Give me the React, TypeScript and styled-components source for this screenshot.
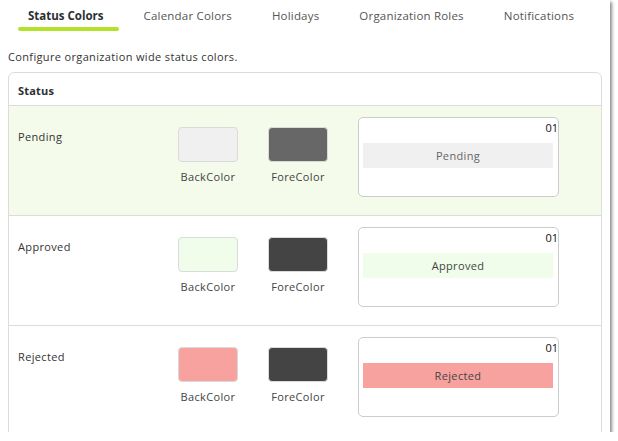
import React from "react";
import styled, { createGlobalStyle } from "styled-components";

const GlobalStyle = createGlobalStyle`
  html, body {
    margin: 0;
    padding: 0;
    background: #ffffff;
  }
  body {
    font-family: "Open Sans", "Liberation Sans", sans-serif;
    color: #333;
    letter-spacing: 0.35px;
  }
`;

const Window = styled.div`
  width: 610px;
  height: 432px;
  overflow: hidden;
  background: #ffffff;
  box-shadow: 2px 2px 3px rgba(0, 0, 0, 0.45);
`;

const TabBar = styled.div`
  display: flex;
  padding-left: 8px;
`;

const Tab = styled.div<{ $active?: boolean }>`
  position: relative;
  padding: 9px 20px 9px;
  font-size: 11.5px;
  line-height: 14px;
  font-weight: ${(p) => (p.$active ? 700 : 400)};
  letter-spacing: ${(p) => (p.$active ? "0" : "0.2px")};
  color: ${(p) => (p.$active ? "#2b2f33" : "#555")};
  white-space: nowrap;

  &::after {
    content: "";
    display: ${(p) => (p.$active ? "block" : "none")};
    position: absolute;
    left: 10px;
    right: 5px;
    bottom: 1px;
    height: 4px;
    border-radius: 2px;
    background: #b3e22b;
  }
`;

const Intro = styled.p`
  margin: 18px 0 8px 8px;
  font-size: 11px;
  line-height: 14px;
  color: #333;
`;

const Card = styled.div`
  margin: 0 8px;
  border: 1px solid #dcdcdc;
  border-radius: 6px 6px 0 0;
`;

const CardHeader = styled.div`
  padding: 11px 9px 7px;
  font-size: 11px;
  line-height: 14px;
  font-weight: 700;
  letter-spacing: 0.2px;
  color: #2b2f33;
  border-bottom: 1px solid #dcdcdc;
`;

const Row = styled.div<{ $highlight?: boolean }>`
  display: flex;
  align-items: flex-start;
  height: 87px;
  padding: 11px 9px;
  background: ${(p) => (p.$highlight ? "#f4fbea" : "#ffffff")};
  border-bottom: 1px solid #dcdcdc;
`;

const StatusName = styled.div`
  width: 160px;
  margin-top: 13px;
  font-size: 11px;
  line-height: 14px;
  color: #333;
`;

const SwatchGroup = styled.div`
  display: flex;
  flex-direction: column;
  align-items: center;
  width: 60px;
  margin-top: 10px;
  margin-right: 30px;
`;

const Swatch = styled.div<{ $color: string }>`
  width: 58px;
  height: 33px;
  border: 1px solid #dadada;
  border-radius: 4px;
  background: ${(p) => p.$color};
`;

const SwatchLabel = styled.div`
  margin-top: 8px;
  font-size: 11px;
  line-height: 14px;
  color: #444;
  white-space: nowrap;
`;

const Preview = styled.div`
  width: 190px;
  height: 78px;
  padding: 0 5px 0 4px;
  border: 1px solid #cccccc;
  border-radius: 5px;
  background: #ffffff;
`;

const Counter = styled.div`
  padding-top: 3px;
  margin-right: -5px;
  font-size: 11px;
  line-height: 14px;
  letter-spacing: 0;
  text-align: right;
  color: #111;
`;

const Bar = styled.div<{ $bg: string; $fg: string }>`
  margin-top: 8px;
  height: 25px;
  display: flex;
  align-items: center;
  justify-content: center;
  font-size: 11px;
  background: ${(p) => p.$bg};
  color: ${(p) => p.$fg};
`;

const statuses = [
  { name: "Pending", back: "#f0f0f0", fore: "#676767", text: "#666", highlight: true },
  { name: "Approved", back: "#effdea", fore: "#444444", text: "#444", highlight: false },
  { name: "Rejected", back: "#f8a29f", fore: "#444444", text: "#444", highlight: false },
];

const tabs = ["Status Colors", "Calendar Colors", "Holidays", "Organization Roles", "Notifications"];

export default function App() {
  return (
    <>
      <GlobalStyle />
      <Window>
        <TabBar>
          {tabs.map((t, i) => (
            <Tab key={t} $active={i === 0}>
              {t}
            </Tab>
          ))}
        </TabBar>
        <Intro>Configure organization wide status colors.</Intro>
        <Card>
          <CardHeader>Status</CardHeader>
          {statuses.map((s) => (
            <Row key={s.name} $highlight={s.highlight}>
              <StatusName>{s.name}</StatusName>
              <SwatchGroup>
                <Swatch $color={s.back} />
                <SwatchLabel>BackColor</SwatchLabel>
              </SwatchGroup>
              <SwatchGroup>
                <Swatch $color={s.fore} />
                <SwatchLabel>ForeColor</SwatchLabel>
              </SwatchGroup>
              <Preview>
                <Counter>01</Counter>
                <Bar $bg={s.back} $fg={s.text}>
                  {s.name}
                </Bar>
              </Preview>
            </Row>
          ))}
        </Card>
      </Window>
    </>
  );
}
